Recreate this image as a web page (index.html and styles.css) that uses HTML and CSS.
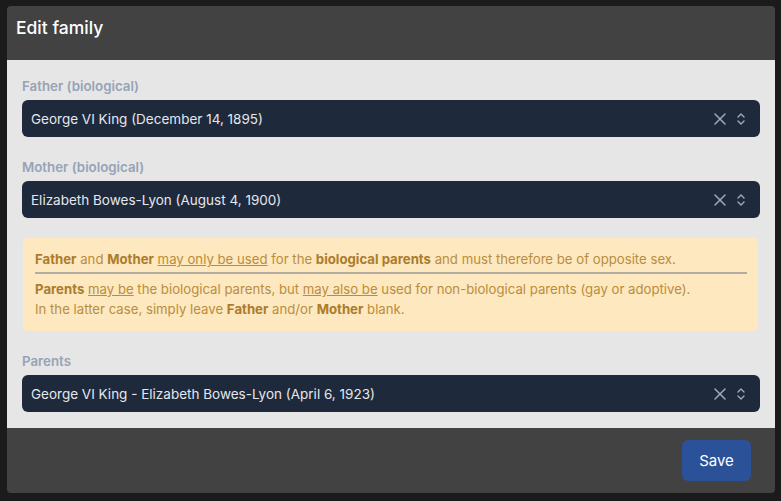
FILE: index.html
```html
<!DOCTYPE html>
<html>
<head>
<meta charset="utf-8">
<link rel="stylesheet" href="styles.css">
</head>
<body>
<div class="modal">
  <div class="modal-header">Edit family</div>
  <div class="modal-body">
    <div class="field">
      <div class="label">Father (biological)</div>
      <div class="select">
        <span class="value">George VI King (December 14, 1895)</span>
        <span class="icons">
          <svg class="x" width="14" height="14" viewBox="0 0 14 14"><path d="M2 2L12 12M12 2L2 12" stroke="currentColor" stroke-width="1.5" fill="none" stroke-linecap="round"/></svg>
          <svg class="chev" width="10" height="14" viewBox="0 0 10 14"><path d="M2 5L5 2L8 5M2 9L5 12L8 9" stroke="currentColor" stroke-width="1.4" fill="none" stroke-linecap="round" stroke-linejoin="round"/></svg>
        </span>
      </div>
    </div>
    <div class="field">
      <div class="label">Mother (biological)</div>
      <div class="select">
        <span class="value">Elizabeth Bowes-Lyon (August 4, 1900)</span>
        <span class="icons">
          <svg class="x" width="14" height="14" viewBox="0 0 14 14"><path d="M2 2L12 12M12 2L2 12" stroke="currentColor" stroke-width="1.5" fill="none" stroke-linecap="round"/></svg>
          <svg class="chev" width="10" height="14" viewBox="0 0 10 14"><path d="M2 5L5 2L8 5M2 9L5 12L8 9" stroke="currentColor" stroke-width="1.4" fill="none" stroke-linecap="round" stroke-linejoin="round"/></svg>
        </span>
      </div>
    </div>
    <div class="alert">
      <div class="line"><b>Father</b> and <b>Mother</b> <u>may only be used</u> for the <b>biological parents</b> and must therefore be of opposite sex.</div>
      <div class="divider"></div>
      <div class="line"><b>Parents</b> <u>may be</u> the biological parents, but <u>may also be</u> used for non-biological parents (gay or adoptive).</div>
      <div class="line">In the latter case, simply leave <b>Father</b> and/or <b>Mother</b> blank.</div>
    </div>
    <div class="field">
      <div class="label">Parents</div>
      <div class="select">
        <span class="value">George VI King - Elizabeth Bowes-Lyon (April 6, 1923)</span>
        <span class="icons">
          <svg class="x" width="14" height="14" viewBox="0 0 14 14"><path d="M2 2L12 12M12 2L2 12" stroke="currentColor" stroke-width="1.5" fill="none" stroke-linecap="round"/></svg>
          <svg class="chev" width="10" height="14" viewBox="0 0 10 14"><path d="M2 5L5 2L8 5M2 9L5 12L8 9" stroke="currentColor" stroke-width="1.4" fill="none" stroke-linecap="round" stroke-linejoin="round"/></svg>
        </span>
      </div>
    </div>
  </div>
  <div class="modal-footer">
    <button class="btn-save">Save</button>
  </div>
</div>
</body>
</html>
```
FILE: styles.css
```css
html, body {
  margin: 0;
  padding: 0;
  background: #1b1b1b;
  font-family: Inter, "Noto Sans", sans-serif;
}
body {
  padding: 6px 6px 0 7px;
}
.modal {
  width: 768px;
  border-radius: 4px;
  overflow: hidden;
}
.modal-header {
  background: #424242;
  color: #ffffff;
  height: 54px;
  box-sizing: border-box;
  padding: 10px 9px 0 9px;
  font-size: 17.5px;
  line-height: 24px;
  font-weight: 500;
}
.modal-body {
  background: #e6e6e6;
  padding: 16px 15px 16px 15px;
  display: flex;
  flex-direction: column;
  gap: 20px;
}
.label {
  color: #97a3b6;
  font-size: 13.3px;
  font-weight: 600;
  line-height: 20px;
  margin-bottom: 4px;
}
.select {
  height: 37px;
  box-sizing: border-box;
  background: #1e293b;
  border-radius: 6px;
  display: flex;
  align-items: center;
  padding: 0 14px 0 9px;
  color: #e5e7eb;
  font-size: 13.5px;
}
.value {
  flex: 1;
}
.icons {
  display: flex;
  align-items: center;
  gap: 9px;
  color: #a3aab5;
}
.alert {
  background: #fde8bf;
  border-radius: 4px;
  margin: 0 2px 0 1px;
  padding: 11px 11px 12px 12px;
  color: #ba8d3e;
  font-size: 13.2px;
  line-height: 20px;
}
.alert b {
  font-weight: 700;
  color: #ac7c2c;
}
.divider {
  height: 2px;
  background: #b4aea2;
  margin: 3px 0 5px 0;
}
.modal-footer {
  background: #424242;
  height: 65px;
  box-sizing: border-box;
  padding: 12px 24px;
  display: flex;
  justify-content: flex-end;
  align-items: center;
}
.btn-save {
  background: #2b5198;
  color: #ffffff;
  border: none;
  border-radius: 6px;
  width: 69px;
  height: 41px;
  font-family: Inter, "Noto Sans", sans-serif;
  font-size: 15px;
  font-weight: 400;
}
```
